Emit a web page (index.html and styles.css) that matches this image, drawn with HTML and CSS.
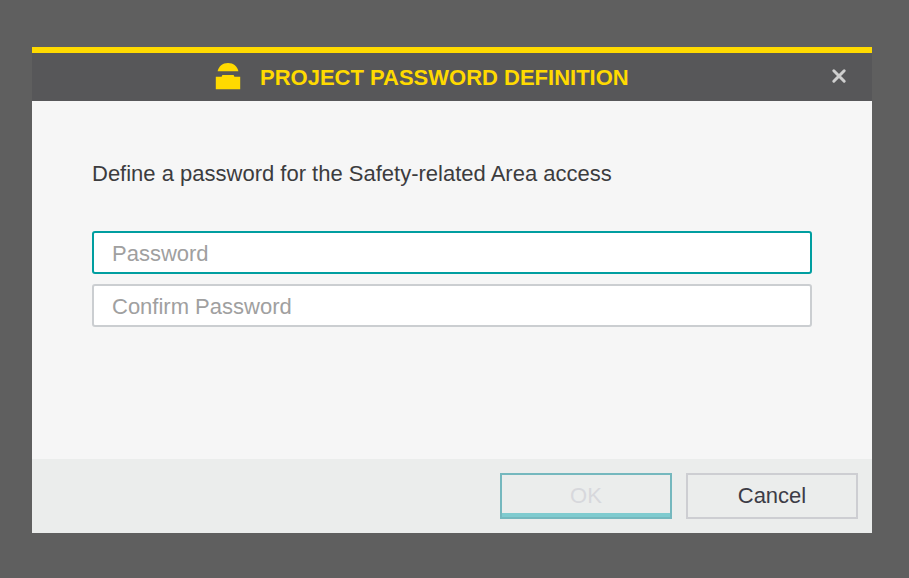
FILE: index.html
```html
<!DOCTYPE html>
<html lang="en">
<head>
    <meta charset="UTF-8">
    <meta name="viewport" content="width=device-width, initial-scale=1.0">
    <title>Project Password Definition</title>
    <link rel="stylesheet" href="styles.css">
</head>
<body>
    <form class="dialog">
        <div class="dialog-header">
            <svg class="header-icon" width="26" height="28" viewBox="0 0 26 28">
                <path d="M2.6 9.3C3.6 4.4 7.6 1 13 1s9.4 3.4 10.4 8.3z"/>
                <path d="M.8 14.8h5.8l.8-1.8h11.2l.8 1.8h5.8v12.4H.8z"/>
            </svg>
            <h1>PROJECT PASSWORD DEFINITION</h1>
            <button type="button" class="close" aria-label="Close">
                <svg width="16" height="16" viewBox="0 0 16 16">
                    <path d="M2.8 2.8l10.4 10.4M13.2 2.8L2.8 13.2"/>
                </svg>
            </button>
        </div>
        <div class="dialog-body">
            <p>Define a password for the Safety-related Area access</p>
            <input type="password" class="field active" placeholder="Password">
            <input type="password" class="field" placeholder="Confirm Password">
        </div>
        <div class="dialog-footer">
            <button type="submit" class="btn btn-ok" disabled>OK</button>
            <button type="button" class="btn">Cancel</button>
        </div>
    </form>
</body>
</html>
```

FILE: styles.css
```css
* {
    box-sizing: border-box;
}

body {
    margin: 0;
    padding: 47px 37px 45px 32px;
    height: 578px;
    background-color: #5f5f5f;
    font-family: "Liberation Sans", Arial, sans-serif;
    font-size: 22px;
    color: #3c3c3e;
}

.dialog {
    display: flex;
    flex-direction: column;
    width: 840px;
    height: 486px;
    background-color: #f6f6f6;
}

.dialog-header {
    display: flex;
    align-items: center;
    height: 54px;
    padding: 0 25px 0 183px;
    border-top: 6px solid #ffda00;
    background-color: #575759;
}

.header-icon {
    margin: 0 19px 2px 0;
    fill: #ffda00;
}

h1 {
    margin: 0;
    padding-top: 1px;
    font-size: 22px;
    line-height: 27px;
    color: #ffda00;
}

.close {
    display: flex;
    margin-left: auto;
    padding: 0 0 2px;
    border: none;
    background: none;
    cursor: pointer;
}

.close path {
    stroke: #cfcfcf;
    stroke-width: 3;
    stroke-linecap: round;
}

.dialog-body {
    display: flex;
    flex-direction: column;
    flex: 1;
    gap: 10px;
    padding: 60px 60px 0;
}

.dialog-body p {
    margin: 0 0 34px;
    line-height: 26px;
}

.field {
    height: 43px;
    padding: 2px 18px 0;
    border: 2px solid #cbced1;
    border-radius: 3px;
    background-color: #fff;
    font: inherit;
    outline: none;
}

.field.active,
.field:focus {
    border-color: #009ea0;
}

.field::placeholder {
    color: #a0a0a0;
}

.dialog-footer {
    display: flex;
    justify-content: flex-end;
    gap: 14px;
    height: 74px;
    padding: 14px;
    background-color: #ebedec;
}

.btn {
    width: 172px;
    height: 46px;
    padding: 0;
    border: 2px solid #cdced2;
    background-color: transparent;
    font: inherit;
    color: #3c3c46;
    cursor: pointer;
}

.btn-ok {
    border-color: #75b8be;
    box-shadow: inset 0 -4px #7fcbcf;
    color: #d7d8dc;
    cursor: default;
}
```
